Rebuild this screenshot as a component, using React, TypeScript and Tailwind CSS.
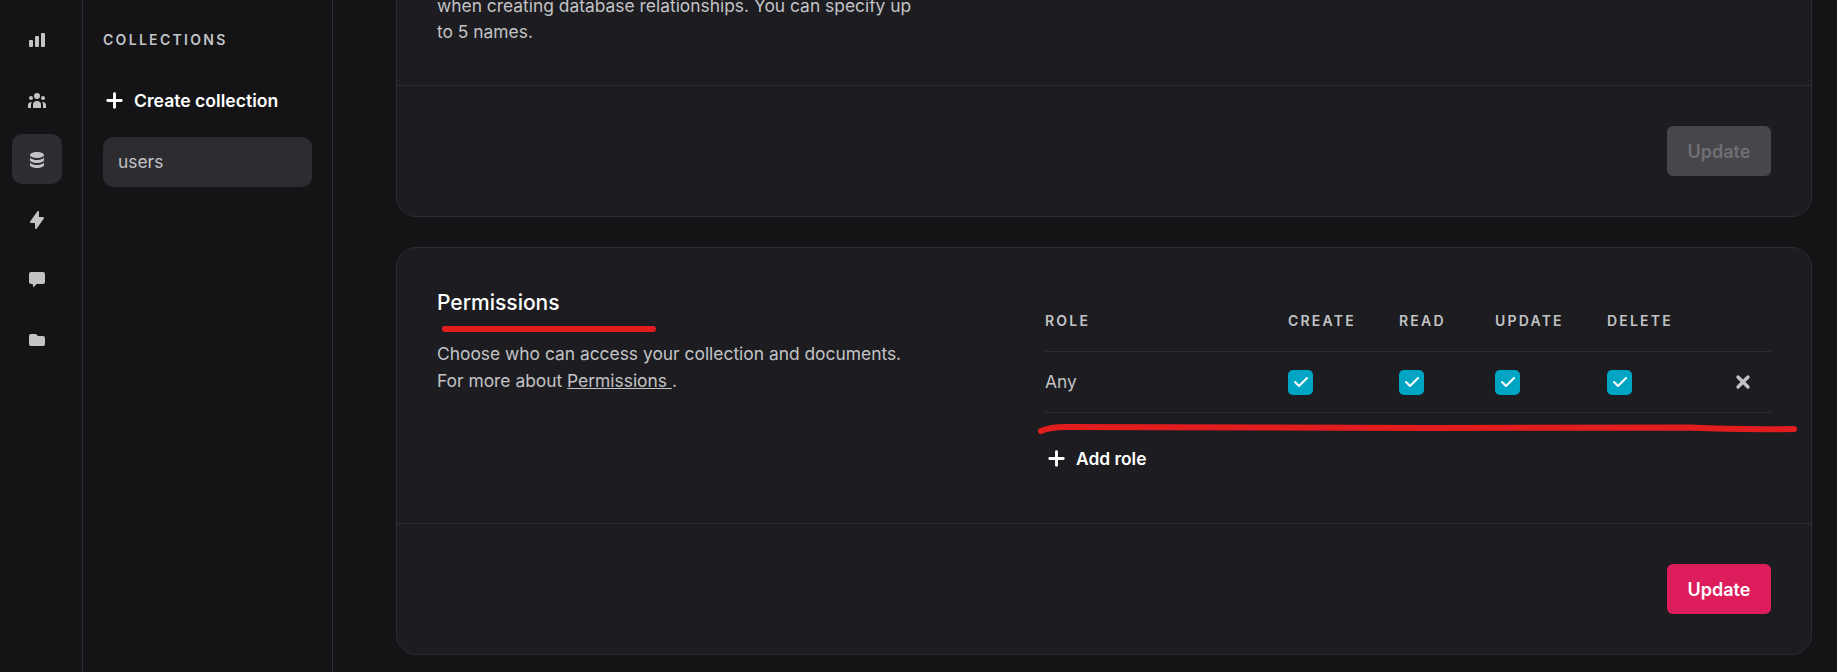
import { HiChartBar, HiUserGroup, HiDatabase, HiLightningBolt, HiFolder, HiCheck } from 'react-icons/hi';
import { Plus, X } from 'lucide-react';

function BubbleIcon({ size, className }: { size: number; className?: string }) {
  return (
    <svg width={size} height={size} viewBox="0 0 20 20" fill="currentColor" className={className}>
      <path d="M4 2h12a2 2 0 0 1 2 2v8a2 2 0 0 1-2 2H9.500l-3 3.500-1-3.500H4a2 2 0 0 1-2-2V4a2 2 0 0 1 2-2z" />
    </svg>
  );
}

const railIcons = [
  { icon: HiChartBar, active: false },
  { icon: HiUserGroup, active: false },
  { icon: HiDatabase, active: true },
  { icon: HiLightningBolt, active: false },
  { icon: BubbleIcon, active: false },
  { icon: HiFolder, active: false },
];

function Checkbox() {
  return (
    <div className="flex h-[25px] w-[25px] items-center justify-center rounded-[5px] bg-[#00a5c4]">
      <HiCheck size={20} className="text-white" />
    </div>
  );
}

export default function App() {
  return (
    <div className="relative flex h-[672px] overflow-hidden bg-[#141416] font-['Inter',sans-serif] text-[17.4px] text-[#c3c3c6]">
      {/* icon rail */}
      <div className="flex w-[83px] shrink-0 flex-col items-start gap-[10px] border-r border-[#2d2d31] pl-[12px] pt-[14px]">
        {railIcons.map(({ icon: Icon, active }, i) => (
          <div key={i} className={`flex h-[50px] w-[50px] items-center justify-center rounded-[10px] pt-[2px] ${active ? 'bg-[#2d2d31]' : ''}`}>
            <Icon size={20} className="text-[#c3c3c6]" />
          </div>
        ))}
      </div>

      {/* collections list */}
      <div className="w-[250px] shrink-0 border-r border-[#2d2d31] pl-[20px] pr-[20px] pt-[32px]">
        <div className="text-[14px] leading-[16px] font-semibold tracking-[2.3px] text-[#c3c3c6]">COLLECTIONS</div>
        <div className="mt-[39px] flex h-[27px] items-center gap-[8px] font-semibold text-white">
          <Plus size={23} strokeWidth={3} />
          <span className="text-[17.6px] leading-[27px]">Create collection</span>
        </div>
        <div className="mt-[23px] flex h-[50px] w-[209px] items-center rounded-[10px] bg-[#2d2d31] pl-[15px]">users</div>
      </div>

      {/* main content */}
      <div className="min-w-0 flex-1 pl-[63px] pr-[25px]">
        <div className="-mt-[100px] rounded-[20px] border border-[#2d2d31] bg-[#1d1d21]">
          <div className="h-[185px] border-b border-[#2d2d31] pl-[40px] pt-[92px]">
            <p className="w-[485px] leading-[26px]">
              when creating database relationships. You can specify up to 5 names.
            </p>
          </div>
          <div className="flex justify-end pt-[40px] pb-[40px] pr-[40px]">
            <button className="h-[50px] w-[104px] rounded-[6px] bg-[#46464b] text-[18px] font-semibold text-[#6f6f74]">Update</button>
          </div>
        </div>

        <div className="mt-[30px] rounded-[20px] border border-[#2d2d31] bg-[#1d1d21]">
          <div className="flex h-[276px] border-b border-[#2d2d31] pl-[40px]">
            <div className="w-[608px] shrink-0 pt-[41px]">
              <h2 className="text-[21px] leading-[28px] font-medium text-white">Permissions</h2>
              <p className="mt-[23px] leading-[27px]">
                Choose who can access your collection and documents.
                <br />
                For more about <a className="underline">Permissions </a>.
              </p>
            </div>
            <div className="w-[726px] shrink-0 pt-[58px]">
              <div className="grid h-[46px] grid-cols-[243px_111px_96px_112px_164px] border-b border-[#2d2d31] text-[14px] leading-[30px] font-semibold tracking-[2.2px]">
                <div>ROLE</div>
                <div>CREATE</div>
                <div>READ</div>
                <div>UPDATE</div>
                <div>DELETE</div>
              </div>
              <div className="grid h-[61px] grid-cols-[243px_111px_96px_112px_164px] items-center border-b border-[#2d2d31]">
                <div>Any</div>
                <Checkbox />
                <Checkbox />
                <Checkbox />
                <div className="flex items-center justify-between pr-[18px]">
                  <Checkbox />
                  <X size={20} strokeWidth={4} className="text-[#c3c3c6]" />
                </div>
              </div>
              <div className="mt-[32px] flex h-[27px] items-center gap-[8px] font-semibold text-white">
                <Plus size={23} strokeWidth={3} />
                <span className="leading-[27px]">Add role</span>
              </div>
            </div>
          </div>
          <div className="flex justify-end pt-[40px] pb-[40px] pr-[40px]">
            <button className="h-[50px] w-[104px] rounded-[6px] bg-[#dd1c5b] text-[18px] font-semibold text-white">Update</button>
          </div>
        </div>
      </div>

      {/* hand-drawn red marks on the screenshot */}
      <svg className="pointer-events-none absolute left-0 top-0" width="1837" height="672" fill="none">
        <path d="M445 329H653" stroke="#e21d1f" strokeWidth="6" strokeLinecap="round" />
        <path d="M1041 431C1048 428 1054 427 1066 427C1200 428.500 1500 428 1690 427.500C1720 429 1760 429.500 1794 429" stroke="#e21d1f" strokeWidth="6" strokeLinecap="round" />
      </svg>
    </div>
  );
}
